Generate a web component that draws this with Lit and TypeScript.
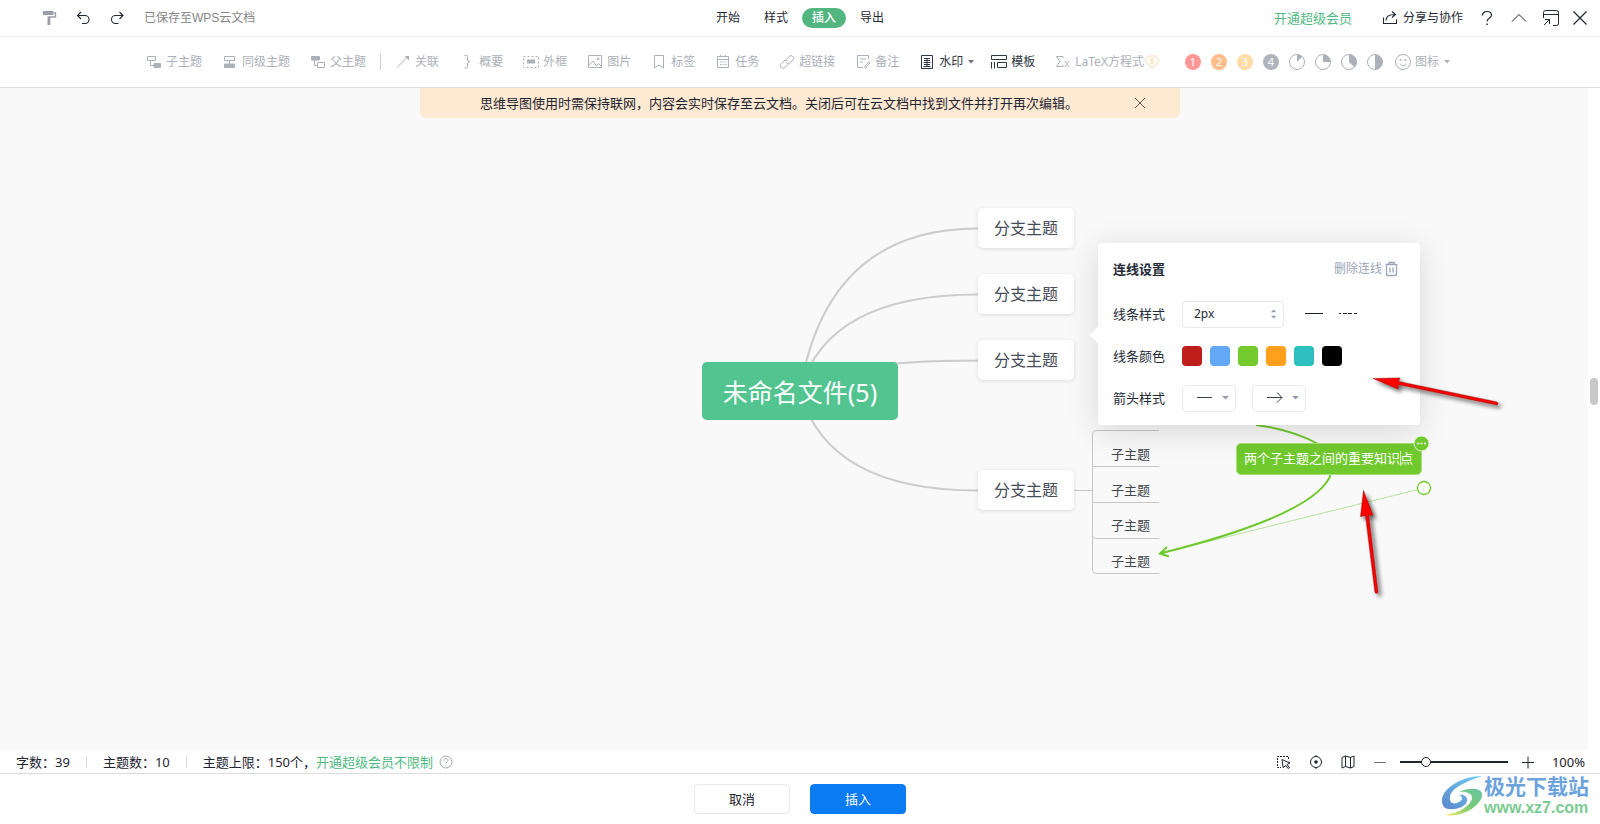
import { LitElement, html, css, svg, nothing, TemplateResult } from "lit";
import { customElement, state } from "lit/decorators.js";
import { classMap } from "lit/directives/class-map.js";
import { styleMap } from "lit/directives/style-map.js";

const icon = (body: unknown, size = 16) => html`<svg
  class="icon"
  width=${size}
  height=${size}
  viewBox="0 0 ${size} ${size}"
  fill="none"
  stroke="currentColor"
  aria-hidden="true"
>${body}</svg>`;

const icons: Record<string, TemplateResult> = {
  roller: icon(svg`<path d="M1 1h10.500v4H1z" fill="currentColor" stroke="none"/><path d="M12 3h1.500v4H7" stroke-width="1.300"/><path d="M5.500 6.500h2.800V15H5.500z" fill="currentColor" stroke="none"/>`),
  undo: icon(svg`<path d="M5 2 1.500 5.500 5 9M1.500 5.500H9a4 4 0 0 1 0 8H6" stroke-width="1.100"/>`),
  redo: icon(svg`<path d="M9.500 2 13 5.500 9.500 9M13 5.500H5.500a4 4 0 0 0 0 8h3" stroke-width="1.100"/>`),
  share: icon(svg`<path d="M1.500 7.500v6h13v-4M4 10.500c0-3.500 2-6 9-6M10 1.500l3.500 3L10 7.500" stroke-width="1.100"/>`),
  help: icon(svg`<path d="M3.500 5.500C3.500 3 5.500 1.500 8 1.500s4.500 1.500 4.500 3.800C12.500 8 8 8 8 11.500" stroke-width="1.200"/><path d="M7.300 13.500h1.500V15H7.300z" fill="currentColor" stroke="none"/>`),
  up: icon(svg`<path d="m1 11.500 7-7 7 7"/>`),
  window: icon(svg`<path d="M.5 8V2.500a2 2 0 0 1 2-2h11a2 2 0 0 1 2 2v11a2 2 0 0 1-2 2H10M.5 4.500h15M1 15l5.500-5.500M2 9.500h4.500V14"/>`),
  close: icon(svg`<path d="m1.500 1.500 13 13m0-13-13 13" stroke-width="1.200"/>`),
  child: icon(svg`<path d="M1.500 2.500h8v4h-8zM4.500 6.500v5H8"/><rect x="7.500" y="9" width="7.500" height="5" rx="1" fill="currentColor" stroke="none"/>`),
  sibling: icon(svg`<path d="M2.500 2.500h10v4h-10zM7.500 6.500V10"/><rect x="2" y="9.500" width="11" height="4.500" rx="1" fill="currentColor" stroke="none"/>`),
  parent: icon(svg`<rect x="1" y="2" width="9" height="4.500" rx="1" fill="currentColor" stroke="none"/><path d="M4.500 6v5.500h3M7.500 8.500h7v5h-7z"/>`),
  relation: icon(svg`<path d="m2 13.500 11-11"/><path d="M9.500 2H14v4.500z" fill="currentColor" stroke="none"/>`),
  summary: icon(svg`<path d="M5.500 1.500h2q1 0 1 1v4l2.500 1.200L8.500 9v4q0 1-1 1h-2"/>`),
  frame: icon(svg`<path d="M.5 2.500h15v11H.5z" stroke-dasharray="2 2"/><path d="M4 5.500h8v4H4z" fill="currentColor" stroke="none"/>`),
  picture: icon(svg`<path d="M1.500 1.500h13v12h-13zM2 11l4-4 3.500 5 2-2.500 3 3"/><circle cx="11" cy="5" r="1"/>`),
  tag: icon(svg`<path d="M3.500 1.500h9v12.500L8 11l-4.500 3z"/>`),
  task: icon(svg`<path d="M2.500 2.500h11v11h-11zM2.500 5.500h11M5.500 1v2m5-2v2M5 8h1.500m1.200 0h1.500m1.200 0h1.500M5 10.500h1.500m1.200 0h1.500m1.200 0h1.500"/>`),
  link: icon(svg`<path d="M7 5.500 10 2.500a2.600 2.600 0 0 1 3.800 3.800L11 9a2.600 2.600 0 0 1-3.800 0M9 10.500l-3 3a2.600 2.600 0 0 1-3.800-3.800L5 7a2.600 2.600 0 0 1 3.800 0"/>`),
  note: icon(svg`<path d="M13.500 5V1.500h-11v12H8M5 5h6M5 8h3M10 14v-2l4-4 1 1-4.500 5z"/>`),
  watermark: icon(svg`<path d="M2.500 1.500h11v13h-11z"/><path d="M5 4.500h6M5 6.500h6M4.500 8.500h7M5 10.500h6M4.500 12.500h7M8 4v8.500"/>`),
  template: icon(svg`<path d="M.5 1.500h15v4H.5zM.5 8v6.500M3.500 8v6.500M6.500 8.500h9v5h-9z"/>`),
  latex: icon(svg`<path d="M8 4V2.500H1.500L5 7.500l-3.500 5H8V11M9.500 7l4.500 6m0-6-4.500 6"/>`),
  coin: icon(svg`<path d="M4.500 2h7L15 6.500 8 14.500 1 6.500z"/><path d="M10 5.500C9 4.500 6.200 4.500 6.200 6s3.600 1 3.600 2.600S7 10 6 9M8 3.800v6.800"/>`),
  smile: icon(svg`<circle cx="8" cy="8" r="7.500"/><path d="M5 9.500c1 3 5 3 6 0"/><circle cx="5.500" cy="6" r=".9" fill="currentColor" stroke="none"/><circle cx="10.500" cy="6" r=".9" fill="currentColor" stroke="none"/>`),
  caret: icon(svg`<path d="M1 2h6L4 5.500z" fill="currentColor" stroke="none"/>`, 8),
  trash: icon(svg`<path d="M2.500 4.500v9q0 1 1 1h8q1 0 1-1v-9M1.500 3.500h12M5 3V1.500h5V3M6 6.500v5M9 6.500v5" stroke-width="1.300"/>`),
  select: icon(svg`<path d="M12.500 5V2.500h-11v11H5" stroke-dasharray="2 1"/><path d="m6 5.500 8 3.500-3 1.500 2.500 3-1.500 1-2-3L7 13.500z"/>`),
  target: icon(svg`<circle cx="8" cy="8" r="5.500"/><circle cx="8" cy="8" r="1.800" fill="currentColor" stroke="none"/><path d="M8 1v2m0 10v2M2 8h1m10 0h1"/>`),
  map: icon(svg`<path d="m2 3.500 3.500-1.500 5 1.500 3.500-1.500v10.500L10.500 14l-5-1.500L2 14zM5.500 2v10.500m5-9V14"/>`),
  minus: icon(svg`<path d="M2 8.500h12"/>`),
  plus: icon(svg`<path d="M2 8.500h12M8 2.500v12"/>`),
  helpRound: icon(svg`<circle cx="7" cy="7" r="6"/><path d="M5 5.500c0-2.500 4-2.500 4 0C9 7 7 7 7 8.500m0 1.200v1"/>`, 14),
};

/** Filled sector of a progress disc, starting at twelve o'clock. */
const pie = (fraction: number) => {
  const a = fraction * Math.PI * 2;
  const x = 8 + 7.5 * Math.sin(a);
  const y = 8 - 7.5 * Math.cos(a);
  return icon(svg`<circle cx="8" cy="8" r="7.500"/><path d="M8 8V.5A7.500 7.500 0 0 1 ${x} ${y}Z" fill="currentColor" stroke="none"/>`);
};

interface Tool { icon: string; label: string; active?: boolean; caret?: boolean; after?: "rule" | "coin"; }

const tools: Tool[] = [
  { icon: "child", label: "子主题" },
  { icon: "sibling", label: "同级主题" },
  { icon: "parent", label: "父主题", after: "rule" },
  { icon: "relation", label: "关联" },
  { icon: "summary", label: "概要" },
  { icon: "frame", label: "外框" },
  { icon: "picture", label: "图片" },
  { icon: "tag", label: "标签" },
  { icon: "task", label: "任务" },
  { icon: "link", label: "超链接" },
  { icon: "note", label: "备注" },
  { icon: "watermark", label: "水印", active: true, caret: true },
  { icon: "template", label: "模板", active: true },
  { icon: "latex", label: "LaTeX方程式", after: "coin" },
];

const priorities = ["#ff9797", "#ffbd8a", "#ffdca6", "#b0b4bd"];
const progress = [1 / 8, 1 / 4, 3 / 8, 1 / 2];

const base = css`
  * { box-sizing: border-box; }
  button, input, select {
    font: inherit; color: inherit; margin: 0; padding: 0; border: 0;
    background: none; border-radius: 0; outline: none;
  }
  button { display: inline-flex; align-items: center; white-space: nowrap; cursor: pointer; }
  a { color: inherit; text-decoration: none; }
  .icon { display: block; flex: none; }
`;

@customElement("title-bar")
class TitleBar extends LitElement {
  @state() private tab = "插入";
  static styles = [base, css`
    :host {
      display: grid; grid-template-columns: 1fr auto 1fr; align-items: center;
      height: 37px; border-bottom: 1px solid #f0f0f0; background: #fff;
      font-size: 12px; line-height: 20px; color: #1f2733;
    }
    .left, .right { display: flex; align-items: center; }
    .left { padding-left: 42px; gap: 18px; }
    .roller { color: #9a9ea6; }
    .saved { font-family: "Liberation Sans", "Noto Sans CJK SC", sans-serif; color: #868686; }
    .tabs { display: flex; gap: 4px; }
    .tab { padding: 0 10px; border-radius: 10px; height: 20px; }
    .current { background: #52b681; color: #fff; font-weight: 500; }
    .right { justify-content: flex-end; padding-right: 12px; gap: 16px; }
    .vip { font-size: 13px; color: #4fb981; margin-right: 14px; }
    .share { gap: 5px; }
    .window { display: flex; gap: 13px; }
  `];
  render() {
    return html`
      <div class="left">
        <button class="roller" aria-label="格式刷">${icons.roller}</button>
        <button aria-label="撤销">${icons.undo}</button>
        <button aria-label="恢复">${icons.redo}</button>
        <span class="saved">已保存至WPS云文档</span>
      </div>
      <nav class="tabs">
        ${["开始", "样式", "插入", "导出"].map((t) => html`
          <button class=${classMap({ tab: true, current: t === this.tab })} @click=${() => (this.tab = t)}>${t}</button>`)}
      </nav>
      <div class="right">
        <a class="vip" href="#vip">开通超级会员</a>
        <button class="share">${icons.share}分享与协作</button>
        <button aria-label="帮助">${icons.help}</button>
        <button aria-label="收起">${icons.up}</button>
        <div class="window">
          <button aria-label="窗口">${icons.window}</button>
          <button aria-label="关闭">${icons.close}</button>
        </div>
      </div>`;
  }
}

@customElement("tool-bar")
class ToolBar extends LitElement {
  static styles = [base, css`
    :host {
      display: flex; align-items: center; justify-content: center;
      height: 51px; padding-right: 3px; border-bottom: 1px solid #dfdfdf; background: #fff;
      font-size: 12px; line-height: 20px; color: #acb0b8;
    }
    .tools { display: flex; align-items: center; gap: 20px; }
    .tool { gap: 4px; }
    .active { color: #2f3645; }
    .caret { display: flex; }
    .active .caret { color: #6c717c; margin-right: -4px; }
    .rule { width: 1px; height: 16px; background: #ccced3; margin: 0 -6px; }
    .latex { display: flex; align-items: center; }
    .coin { color: #fbdcaa; }
    .marks { display: flex; align-items: center; gap: 10px; margin: 0 12px 0 25px; }
    .priority {
      width: 16px; height: 16px; border-radius: 50%; color: #fff;
      justify-content: center; font-size: 11px; line-height: 16px;
    }
  `];
  render() {
    return html`
      <div class="tools">
        ${tools.map((t) => {
          const button = html`<button class=${classMap({ tool: true, active: !!t.active })}>
            ${icons[t.icon]}<span>${t.label}</span>${t.caret ? html`<span class="caret">${icons.caret}</span>` : nothing}
          </button>`;
          if (t.after === "rule") return html`${button}<span class="rule"></span>`;
          if (t.after === "coin") return html`<span class="latex">${button}<span class="coin">${icons.coin}</span></span>`;
          return button;
        })}
      </div>
      <div class="marks">
        ${priorities.map((c, i) => html`<button class="priority" style=${styleMap({ background: c })}>${i + 1}</button>`)}
        ${progress.map((p) => html`<button aria-label="进度 ${p * 100}%">${pie(p)}</button>`)}
      </div>
      <button class="tool">${icons.smile}<span>图标</span><span class="caret">${icons.caret}</span></button>`;
  }
}

@customElement("line-settings")
class LineSettings extends LitElement {
  static styles = [base, css`
    :host {
      display: flex; flex-direction: column; width: 322px; padding: 14px 20px 13px 15px;
      background: #fff; border-radius: 4px; box-shadow: 0 6px 32px rgba(0, 0, 0, 0.14);
      font-size: 13px; line-height: 20px; color: #232a36;
    }
    :host::before {
      content: ""; position: absolute; left: -6px; top: 86px; width: 12px; height: 12px;
      background: #fff; transform: rotate(45deg);
    }
    .head { display: flex; justify-content: space-between; align-items: center; height: 24px; margin-bottom: 19px; }
    .title { margin: 0; font-size: 13px; font-weight: 700; }
    .delete { font-size: 12px; color: #9aa5b8; gap: 2px; }
    .row { display: grid; grid-template-columns: 52px auto; column-gap: 17px; justify-content: start; align-items: center; height: 28px; }
    .row + .row { margin-top: 14px; }
    .controls { display: flex; align-items: center; }
    .stepper { display: flex; align-items: center; width: 102px; height: 27px; border: 1px solid #e6e9f0; border-radius: 4px; padding: 0 6px 0 11px; }
    .size { width: 100%; min-width: 0; font-size: 12px; }
    .arrows { color: #8f9db5; }
    .style { margin-left: 20px; }
    .style + .style { margin-left: 14px; }
    .colors { display: flex; gap: 8px; }
    .swatch { appearance: none; width: 20px; height: 20px; border-radius: 4px; }
    .pick { display: grid; width: 54px; height: 27px; margin-right: 16px; align-items: center; }
    .pick > * { grid-area: 1 / 1; }
    .choice { appearance: none; width: 54px; height: 27px; border: 1px solid #e6e9f0; border-radius: 4px; color: transparent; }
    .glyph { pointer-events: none; margin-left: 14px; color: #3c424d; }
  `];
  private pick(label: string, arrow: boolean) {
    return html`<label class="pick">
      <select class="choice" aria-label=${label}><option></option></select>
      <svg class="glyph" width="36" height="16" viewBox="0 0 36 16" fill="none" stroke="currentColor">
        ${arrow ? svg`<path d="M1 7.500h15M11 2.500l5 5-5 5"/>` : svg`<path d="M1 7.500h15"/>`}
        <path d="M26 6h7l-3.500 3.500z" fill="#8f9db5" stroke="none"/>
      </svg>
    </label>`;
  }
  render() {
    return html`
      <div class="head">
        <h2 class="title">连线设置</h2>
        <button class="delete">删除连线${icons.trash}</button>
      </div>
      <div class="row">
        <label for="size">线条样式</label>
        <div class="controls">
          <span class="stepper">
            <input class="size" id="size" value="2px" />
            <svg class="arrows" width="8" height="14" viewBox="0 0 8 14" fill="currentColor" aria-hidden="true"><path d="M1 5h6L4 2zM1 9h6l-3 3z"/></svg>
          </span>
          <button class="style" aria-label="实线"><svg width="20" height="10" viewBox="0 0 20 10" stroke="#1c222c"><path d="M1 4.500h18"/></svg></button>
          <button class="style" aria-label="虚线"><svg width="20" height="10" viewBox="0 0 20 10" stroke="#1c222c"><path d="M1 4.500h19" stroke-dasharray="2 2 4 1 4 2 3 1"/></svg></button>
        </div>
      </div>
      <div class="row">
        <span id="color">线条颜色</span>
        <div class="colors" role="radiogroup" aria-labelledby="color">
          ${["#be1e1a", "#63a9f8", "#73cb2d", "#ff9f1a", "#2fbfbf", "#000000"].map((c) => html`
            <input type="radio" name="color" class="swatch" aria-label=${c} style=${styleMap({ background: c })} />`)}
        </div>
      </div>
      <div class="row">
        <span>箭头样式</span>
        <div class="controls">${this.pick("起点箭头", false)}${this.pick("终点箭头", true)}</div>
      </div>`;
  }
}

const branches = [120, 186, 252, 382].map((y) => ({ x: 978, y }));
const children = [342, 378, 413, 449];

@customElement("mind-canvas")
class MindCanvas extends LitElement {
  @state() private notice = true;
  static styles = [base, css`
    :host { display: flex; position: relative; overflow: hidden; background: #f9f9f9; }
    .gutter { position: absolute; right: 0; top: 0; bottom: 0; width: 12px; background: #fff; }
    .thumb { position: absolute; left: 2px; top: 290px; width: 8px; height: 27px; border-radius: 4px; background: #c8c8c8; }
    .stage { position: absolute; top: 0; left: calc(50% - 800px); width: 1600px; height: 662px; }
    .links { position: absolute; inset: 0; }
    .notice {
      position: relative; display: flex; align-items: center; justify-content: space-between;
      width: 760px; height: 30px; margin: 0 auto; padding: 0 34px 0 60px;
      background: #fee9d2; border-radius: 0 0 6px 6px; font-size: 13px; line-height: 20px; color: #1e2430;
    }
    .dismiss { color: #5a5650; }
    .root {
      position: absolute; left: 702px; top: 274px; width: 196px; height: 58px; border-radius: 5px;
      background: #52c48f; color: #fff; font-size: 25px; line-height: 60px; text-align: center;
    }
    .branch {
      position: absolute; width: 96px; height: 40px; border-radius: 5px; background: #fff;
      box-shadow: 0 1px 4px rgba(0, 0, 0, 0.12); color: #464c57; font-size: 16px; line-height: 40px; text-align: center;
    }
    .child {
      position: absolute; left: 1093px; width: 66px; height: 36px; padding-left: 18px; padding-top: 14px;
      color: #43474e; font-size: 13px; line-height: 20px;
    }
    .caption {
      position: absolute; left: 1236px; top: 355px; width: 186px; height: 32px; padding: 0 7px;
      border: 1px solid #a5e07a; border-radius: 5px; background: #70c92d; color: #fff;
    }
    .words { width: 100%; height: 28px; font-size: 13px; line-height: 28px; }
    .cursor { position: absolute; left: 163px; top: 7px; width: 1px; height: 15px; background: #d8f3c3; }
    .panel { position: absolute; left: 1098px; top: 155px; }
  `];
  render() {
    const ends = branches.map((b) => b.y + 20.5);
    return html`
      <div class="stage">
        <svg class="links" width="1600" height="662" viewBox="0 0 1600 662" fill="none">
          <g stroke="#ccc" stroke-width="2">${ends.map((y) => svg`<path d="M800 303Q827 ${y} 978 ${y}"/>`)}</g>
          <path stroke="#c6c6c6" d="M1074 402.500h18.500M1159 342.500h-63q-3.500 0-3.500 3.500v136q0 3.500 3.500 3.500h63M1159 378.500h-66M1159 414.500h-66M1159 450.500h-63q-3.500 0-3.500-3.500"/>
          <path stroke="#b5e39a" d="M1160 465.500 1424 400"/>
          <path stroke="#6dc82c" stroke-width="2" d="M1256 337C1280 340 1303 347 1320 357M1331 386C1320 417 1250 443 1160 465.500M1167 459l-7 6.500 9 3"/>
        </svg>
        <div class="root">未命名文件(5)</div>
        ${branches.map((b) => html`<div class="branch" style=${styleMap({ left: `${b.x}px`, top: `${b.y}px` })}>分支主题</div>`)}
        ${children.map((y) => html`<div class="child" style=${styleMap({ top: `${y}px` })}>子主题</div>`)}
        <div class="caption"><input class="words" aria-label="连线说明" value="两个子主题之间的重要知识点" /><span class="cursor"></span></div>
        <line-settings class="panel"></line-settings>
        <svg class="links" width="1600" height="662" viewBox="0 0 1600 662" fill="none" pointer-events="none">
          <defs><filter id="drop" x="-20%" y="-40%" width="150%" height="220%"><feDropShadow dx="3" dy="3" stdDeviation="2" flood-color="#000" flood-opacity=".6"/></filter></defs>
          <circle cx="1421.500" cy="355.500" r="7.500" fill="#70c92d" stroke="#e6f6da"/>
          <path d="M1417 355.500h2m1.500 0h2m1.500 0h2" stroke="#fff" stroke-width="1.500"/>
          <circle cx="1424" cy="400" r="6.500" fill="#fff" stroke="#70c92d" stroke-width="1.300"/>
          <g filter="url(#drop)" fill="#fe0000" stroke="#8a1010" stroke-width=".5">
            <path d="m1373 290.500 27-.5-1.500 3.500 98.500 20.500q2 1.500 0 3L1398.300 296.500l-.3 4.500z"/>
            <path d="m1363.500 402.500 9.500 25-4.300-.5 9.300 77.500q-1.500 2-3 0l-9.500-77-5 1z"/>
          </g>
        </svg>
      </div>
      ${this.notice ? html`<div class="notice">
        <span>思维导图使用时需保持联网&#xFF0C;内容会实时保存至云文档。关闭后可在云文档中找到文件并打开再次编辑。</span>
        <button class="dismiss" aria-label="关闭提示" @click=${() => (this.notice = false)}>
          <svg width="12" height="12" viewBox="0 0 12 12" stroke="currentColor"><path d="m1 1 10 10m0-10L1 11"/></svg>
        </button>
      </div>` : nothing}
      <div class="gutter"><div class="thumb"></div></div>`;
  }
}

@customElement("status-bar")
class StatusBar extends LitElement {
  static styles = [base, css`
    :host {
      display: flex; align-items: center; justify-content: space-between; height: 24px;
      padding: 1px 15px 0 16px; border-bottom: 1px solid #dcdcdc; background: #fff;
      font-size: 13px; line-height: 20px; color: #1e2430;
    }
    .counts, .view { display: flex; align-items: center; }
    .counts { gap: 16px; }
    .rule { width: 1px; height: 12px; background: #dcdee2; }
    .vip { color: #4fb981; }
    .limit { display: flex; align-items: center; }
    .hint { color: #a4a8b0; margin-left: 6px; }
    .view { gap: 16px; }
    .zoom { display: flex; align-items: center; gap: 12px; }
    .minus { color: #6c717a; }
    .range { appearance: none; width: 108px; height: 16px; }
    .range::-webkit-slider-runnable-track { height: 2px; background: #1e2632; }
    .range::-webkit-slider-thumb {
      appearance: none; width: 10px; height: 10px; margin-top: -4px; border-radius: 50%;
      border: 1px solid #1e2632; background: #fff;
    }
    .value { margin-left: 4px; }
  `];
  render() {
    return html`
      <div class="counts">
        <span>字数&#xFF1A;39</span><span class="rule"></span>
        <span>主题数&#xFF1A;10</span><span class="rule"></span>
        <span class="limit">主题上限&#xFF1A;150个&#xFF0C;<a class="vip" href="#vip">开通超级会员不限制</a><span class="hint">${icons.helpRound}</span></span>
      </div>
      <div class="view">
        <button aria-label="框选">${icons.select}</button>
        <button aria-label="定位">${icons.target}</button>
        <button aria-label="导航">${icons.map}</button>
        <div class="zoom">
          <button class="minus" aria-label="缩小">${icons.minus}</button>
          <input class="range" type="range" aria-label="缩放" min="0" max="100" value="22" />
          <button aria-label="放大">${icons.plus}</button>
          <span class="value">100%</span>
        </div>
      </div>`;
  }
}

@customElement("app-root")
class AppRoot extends LitElement {
  static styles = [base, css`
    :host {
      display: flex; flex-direction: column; height: 100vh; position: relative; overflow: hidden; background: #fff;
      font-family: "Noto Sans", "Noto Sans CJK SC", sans-serif;
    }
    .canvas { flex: 1; }
    .footer { display: flex; justify-content: center; align-items: center; gap: 20px; height: 50px; }
    .action {
      width: 96px; height: 30px; justify-content: center; border-radius: 4px; border: 1px solid #e6e9f0;
      font-size: 13px; line-height: 20px; color: #1e2430;
    }
    .primary { background: #0a7bf2; border-color: #0a7bf2; color: #fff; }
    .brand { position: absolute; right: 11px; bottom: 6px; display: flex; align-items: center; gap: 1px; }
    .site { display: flex; flex-direction: column; }
    .name { font-size: 21px; line-height: 24px; font-weight: 700; color: #6da3dc; }
    .url { font: 700 16px/20px "Liberation Sans", sans-serif; color: #7acb92; }
  `];
  render() {
    return html`
      <title-bar></title-bar>
      <tool-bar></tool-bar>
      <mind-canvas class="canvas"></mind-canvas>
      <status-bar></status-bar>
      <div class="footer">
        <button class="action">取消</button>
        <button class="action primary">插入</button>
      </div>
      <div class="brand">
        <svg width="42" height="42" viewBox="0 0 42 42" aria-hidden="true">
          <defs>
            <linearGradient id="sky" x1="0" y1="1" x2="1" y2="0"><stop offset="0" stop-color="#5b86cc"/><stop offset="1" stop-color="#6fd0f5"/></linearGradient>
            <linearGradient id="leaf" x1="0" y1="1" x2="1" y2="0"><stop offset="0" stop-color="#f5ec5c"/><stop offset=".5" stop-color="#79c977"/><stop offset="1" stop-color="#68c5a4"/></linearGradient>
          </defs>
          <path fill="url(#sky)" d="M41 1C21 1 1 13 1 26c0 5 3 8 7 8 9 1 17-3 18-8 1-4-3-7-8-6 4 1 4 5 0 7-5 3-10 1-9-5C10 13 24 7 41 1z"/>
          <path fill="url(#leaf)" d="M18 17c8-4 22-5 23 2 1 10-18 24-37 21 14-2 25-9 27-16 1-5-5-8-13-7z"/>
        </svg>
        <div class="site"><span class="name">极光下载站</span><span class="url">www.xz7.com</span></div>
      </div>`;
  }
}
